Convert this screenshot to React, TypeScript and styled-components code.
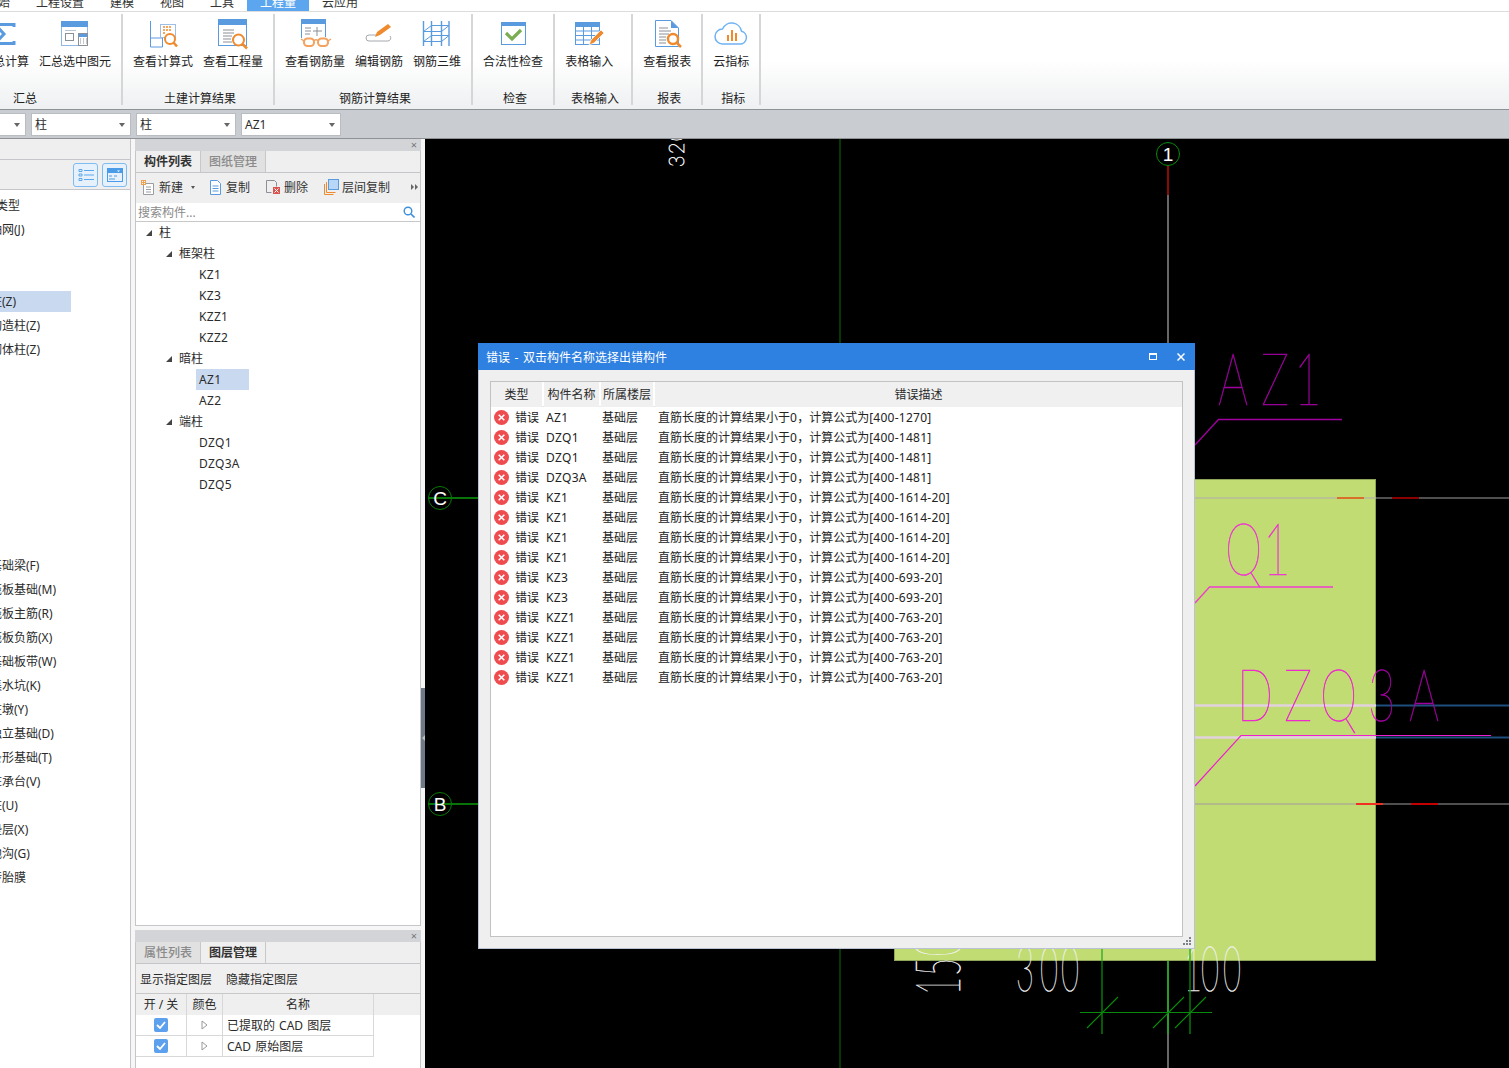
import React from "react";
import styled, { createGlobalStyle } from "styled-components";

const GlobalStyle = createGlobalStyle`
  html, body { margin: 0; padding: 0; background: #f4f4f4; overflow: hidden; }
  body { font-family: "Noto Sans", "Noto Sans CJK SC", sans-serif; font-size: 12px; color: #2b2b2b; }
  * { box-sizing: border-box; }
`;

const Page = styled.div`
  width: 1509px; height: 1068px; overflow: hidden; display: flex; flex-direction: column;
`;

/* ---------- menu ---------- */
const MenuBar = styled.div`
  height: 12px; flex: none; display: flex; align-items: flex-start; overflow: hidden;
  background: #fff; border-bottom: 1px solid #dcdcdc; padding-left: 0;
`;
const MenuTrack = styled.div`display: flex; margin-left: -27px;`;
const MenuTab = styled.div<{ $active?: boolean }>`
  height: 16px; margin-top: -4px; padding: 0 13px; line-height: 14px; white-space: nowrap;
  background: ${p => (p.$active ? "#5ba6ee" : "transparent")};
  color: ${p => (p.$active ? "#fff" : "#333")};
`;

/* ---------- ribbon ---------- */
const Ribbon = styled.div`
  height: 98px; flex: none; display: flex; margin-left: -75px; width: 1584px;
  background: linear-gradient(#fff 0%, #fff 50%, #eef0f1 100%);
  border-bottom: 1px solid #8e9297;
`;
const RibbonGroup = styled.div<{ $width?: number }>`
  margin: 2px 0 4px; padding: 4px 10px 0; display: flex; flex-direction: column; flex: none;
  border-right: 2px solid #d4d6d8; position: relative;
  ${p => (p.$width ? `width: ${p.$width}px;` : "")}
`;
const RibbonButtons = styled.div`display: flex; gap: 10px; align-items: flex-start;`;
const GhostButton = styled.div`width: 36px;`;
const RibbonButton = styled.div`
  display: flex; flex-direction: column; align-items: center; white-space: nowrap; color: #222;
  line-height: 14px;
`;
const IconSlot = styled.div`width: 36px; height: 32px; margin-bottom: 5px; svg { display: block; margin: 0; overflow: visible; }`;
const GroupLabel = styled.div`
  margin-top: auto; text-align: center; line-height: 14px; color: #222; height: 14px; margin-left: -6px; margin-right: -10px; margin-bottom: -1px;
`;

/* ---------- combos ---------- */
const ComboBar = styled.div`
  height: 29px; flex: none; display: flex; gap: 5px; padding-top: 3px; background: #c9ccd1;
  border-bottom: 1px solid #8e9297; margin-left: -74px; width: 1583px;
`;
const Combo = styled.div`
  width: 100px; height: 23px; background: #fff; border: 1px solid #b9bcc0; padding-left: 3px; line-height: 21px; position: relative;
  &::after {
    content: ""; position: absolute; right: 5px; top: 9px; border: 3.5px solid transparent; border-top: 4px solid #666; border-bottom: 0;
  }
`;

/* ---------- main ---------- */
const Main = styled.div`flex: 1; min-height: 0; display: flex; background: #f6f6f6;`;

const NavPanel = styled.div`
  width: 131px; flex: none; background: #fff; border-right: 1px solid #c4c6ca; display: flex; flex-direction: column; overflow: hidden;
`;
const NavHead = styled.div`height: 21px; flex: none; background: #efefef; border-bottom: 1px solid #c4c6ca;`;
const NavTools = styled.div`
  height: 30px; flex: none; background: #efefef; border-bottom: 1px solid #c4c6ca;
  display: flex; justify-content: flex-end; align-items: flex-start; gap: 4px; padding: 3px 3px 0 0;
`;
const ViewToggle = styled.div`
  width: 25px; height: 24px; border: 1px solid #7dbcf2; border-radius: 3px; background: #e6f1fb;
  display: flex; align-items: center; justify-content: center;
`;
const NavList = styled.div`padding-top: 3px; flex: 1;`;
const NavItem = styled.div<{ $active?: boolean; $head?: boolean }>`
  height: 24px; display: flex; align-items: center;
  span {
    display: block; height: 21px; line-height: 21px; width: 81px; margin-left: ${p => (p.$head ? -4 : -10)}px; white-space: nowrap;
    background: ${p => (p.$active ? "#c9d9f0" : "transparent")};
  }
`;

const SidePanel = styled.div`width: 286px; flex: none; display: flex; flex-direction: column; margin-left: 4px;`;
const Pane = styled.div<{ $height?: number }>`
  border: 1px solid #c4c6ca; border-width: 0 1px 1px 1px; background: #fff; display: flex; flex-direction: column;
  ${p => (p.$height ? `height: ${p.$height}px; flex: none;` : "flex: 1; min-height: 0; border-bottom: 0;")}
`;
const PaneStrip = styled.div`
  height: 12px; flex: none; background: #d2d4d8; display: flex; justify-content: flex-end; align-items: center; padding-right: 4px; margin: 0 -1px;
  color: #777; font-size: 11px; line-height: 12px;
`;
const PaneTabs = styled.div`height: 22px; flex: none; display: flex; background: #efefef; border-bottom: 1px solid #c4c6ca; border-top: 0;`;
const PaneTab = styled.div<{ $active?: boolean }>`
  width: 65px; text-align: center; line-height: 21px; font-weight: ${p => (p.$active ? 700 : 500)};
  color: ${p => (p.$active ? "#333" : "#8a8a8a")};
  background: ${p => (p.$active ? "#efefef" : "#e1e1e1")};
  border-right: 1px solid #c8c8c8;
`;
const PaneToolbar = styled.div`
  height: 30px; flex: none; display: flex; align-items: center; padding: 0 0 2px 4px; background: #efefef; position: relative;
`;
const ToolItem = styled.div<{ $gap: number }>`
  display: flex; align-items: center; gap: 3px; margin-right: ${p => p.$gap}px; white-space: nowrap; color: #333;
`;
const CaretDown = styled.i`
  display: block; margin-left: 5px; border: 2.5px solid transparent; border-top: 3px solid #555; border-bottom: 0;
`;
const MoreArrows = styled.div`
  position: absolute; right: 2px; top: 11px; display: flex; gap: 1px;
  i { display: block; border: 3px solid transparent; border-left: 3px solid #666; border-right: 0; }
`;
const SearchRow = styled.div`
  height: 19px; flex: none; display: flex; align-items: center; justify-content: space-between; padding: 0 5px 0 2px;
  color: #8a8a8a; border-bottom: 1px solid #c8c8c8; background: #fff;
`;
const Tree = styled.div`flex: 1; background: #fff;`;
const TreeRow = styled.div<{ $level: number }>`
  height: 21px; display: flex; align-items: center; gap: 7px; padding-left: ${p => 10 + p.$level * 20}px; line-height: 21px;
`;
const TreeLeaf = styled.div<{ $selected?: boolean }>`
  height: 21px; width: 53px; margin-left: 60px; padding-left: 3px; line-height: 21px; white-space: nowrap; letter-spacing: .3px;
  background: ${p => (p.$selected ? "#c9d9f0" : "transparent")};
`;
const PaneGap = styled.div`height: 4px; flex: none;`;
const LayerActions = styled.div`
  height: 30px; flex: none; display: flex; align-items: center; gap: 14px; padding-left: 4px; background: #efefef; border-bottom: 1px solid #c8c8c8;
`;
const LayerHead = styled.div`
  height: 21px; flex: none; display: grid; grid-template-columns: 51px 36px 151px 1fr; background: #efefef;
  span { text-align: center; line-height: 21px; border-right: 1px solid #d8d8d8; }
  span:last-child { border-right: 0; }
`;
const LayerRow = styled.div`
  width: 238px; height: 21px; flex: none; display: grid; grid-template-columns: 51px 36px 151px; border-bottom: 1px solid #d8d8d8;
  & > div { border-right: 1px solid #d8d8d8; display: flex; align-items: center; justify-content: center; }
  & > div:last-child { justify-content: flex-start; padding-left: 4px; white-space: pre; word-spacing: 1px; }
`;
const CheckBox = styled.div`
  width: 14px; height: 14px; border-radius: 2px; background: #5ca0ee; display: flex; align-items: center; justify-content: center;
`;
const Splitter = styled.div`width: 4px; flex: none; padding-top: 549px; background: #f6f6f6;`;
const SplitHandle = styled.div`
  height: 100px; background: #6f7a86; display: flex; align-items: center; justify-content: center;
  &::before { content: ""; border: 3px solid transparent; border-right: 3px solid #b8bec4; border-left: 0; }
`;

/* ---------- canvas ---------- */
const Canvas = styled.div`flex: 1; position: relative; background: #000; overflow: hidden;`;
const Drawing = styled.svg`position: absolute; inset: 0; display: block;`;
const CadText = styled.text`
  font-family: "Lato", "Inter", sans-serif; font-weight: 100;
`;
const AxisText = styled.text`font-family: "Liberation Sans", sans-serif; font-size: 19px;`;

/* ---------- dialog ---------- */
const Dialog = styled.div`
  position: absolute; left: 53px; top: 204px; width: 717px; height: 606px; display: flex; flex-direction: column;
  background: #efefef; border: 1px solid #b9c2d2; border-top: 0;
`;
const DialogTitle = styled.div`
  height: 27px; flex: none; margin: 0 -1px; background: #2e80e1; color: #fff; display: flex; align-items: center; padding: 0 10px 0 8px;
  word-spacing: 1.5px;
`;
const TitleButtons = styled.div`margin-left: auto; display: flex; align-items: center; gap: 20px;`;
const MaxBox = styled.div`width: 8px; height: 7px; border: 1px solid #fff; border-top-width: 2px;`;
const DialogBody = styled.div`flex: 1; min-height: 0; padding: 11px; display: flex;`;
const ErrorTable = styled.div`flex: 1; background: #fff; border: 1px solid #c2c2c2;`;
const ErrorHead = styled.div`
  height: 25px; display: grid; grid-template-columns: 51px 55px 52px 1fr; gap: 2px; background: #fff; border-bottom: 1px solid #e8e8e8;
  span { background: #f0f0f0; text-align: center; line-height: 25px; white-space: nowrap; }
`;
const ErrorRow = styled.div`
  height: 20px; display: grid; grid-template-columns: 55px 56px 56px 1fr; align-items: start; line-height: 22px; white-space: nowrap; color: #222;
`;
const ErrorKind = styled.div`
  display: flex; align-items: center; gap: 6px; padding-left: 3px; height: 22px;
  svg { margin-top: -2px; }
`;
const PartName = styled.div`letter-spacing: .3px;`;
const Formula = styled.span`letter-spacing: .25px;`;
const Grip = styled.svg`position: absolute; right: 2px; bottom: 2px; display: block;`;

/* ---------- icons ---------- */
const B = "#5a9be0";
const O = "#ef8a2e";
const G = "#8b9096";
const Svg = ({ children }: { children: React.ReactNode }) => (
  <svg width="36" height="32" viewBox="0 0 36 32" fill="none">{children}</svg>
);
const icons: Record<string, React.ReactNode> = {
  sigma: <path d="M27 9V6.500H8L17 16 8 25.500H27V23" stroke={B} strokeWidth="3" />,
  sum: (<>
    <rect x="4.500" y="3.500" width="26" height="24" stroke="#8db7e6" fill="#fff" />
    <rect x="4" y="3" width="27" height="6" fill={B} />
    <rect x="8.500" y="15.500" width="8" height="7" stroke={G} />
    <rect x="8" y="12" width="11" height="1" fill="#b9c4d0" />
    <rect x="21.500" y="15.500" width="9" height="12" stroke={G} fill="#fff" />
    <rect x="22" y="16" width="8" height="3" fill={B} />
    <path d="M23 21h1m2 0h1m2 0h1M23 23h1m2 0h1m2 0h1M23 25h1m2 0h1m2 0h1" stroke={G} />
  </>),
  calc: (<>
    <path d="M5.500 3v26h12v-9h-12" stroke={B} />
    <rect x="15.500" y="6.500" width="15" height="13" stroke="#9dbfe6" fill="#fff" />
    <path d="M18 9h2m1 0h2m1 0h2M18 12h2m1 0h2m1 0h2M18 15h2" stroke={O} strokeWidth="1.500" />
    <circle cx="25" cy="21" r="5" stroke={O} strokeWidth="2" fill="#fff" />
    <path d="M28.500 24.500 32 28.500" stroke={O} strokeWidth="2.500" />
  </>),
  qty: (<>
    <rect x="3.500" y="1.500" width="28" height="26" stroke={B} fill="#fff" />
    <rect x="3" y="1" width="29" height="6" fill={B} />
    <path d="M8 12h11M8 15h11M8 18h9M8 21h8M8 24h9" stroke={G} />
    <circle cx="23.500" cy="22" r="5.500" stroke={O} strokeWidth="2" fill="#fff" />
    <path d="M27.500 26 32 30.500" stroke={O} strokeWidth="2.500" />
  </>),
  rebar: (<>
    <path d="M4.500 20V1.500h24V19" stroke={B} />
    <rect x="4" y="1" width="25" height="5" fill={B} />
    <path d="M8 10h6M8 13h6M8 16h5" stroke={G} />
    <path d="M20 9v9M16 13h9" stroke={G} />
    <rect x="7" y="20.500" width="10" height="7.500" rx="3.500" stroke="#f3a25f" strokeWidth="2" fill="#fff" />
    <rect x="21" y="20.500" width="10" height="7.500" rx="3.500" stroke="#f3a25f" strokeWidth="2" fill="#fff" />
    <path d="M17 22.500c1.500-1 2.500-1 4 0M7 23 4 21M31 23l3-2" stroke="#f3a25f" strokeWidth="1.500" />
  </>),
  edit: (<>
    <path d="M16 17H8a3 3 0 0 0 0 6h19a3 3 0 0 0 2-5" stroke="#a4a8ad" />
    <path d="M14 19l2-5 11-8 3 3-11 8z" fill={O} />
  </>),
  grid3d: (<>
    <path d="M4.500 3V28M12.500 3V28M22.500 3V28M30 3V28" stroke={B} strokeWidth="1.400" />
    <path d="M12.500 7.500H30M4.500 13.500H22.500M12.500 17.500H30M4.500 23.500H22.500M4.500 13.500 12.500 7.500M4.500 23.500 12.500 17.500M22.500 13.500 30 7.500M22.500 23.500 30 17.500" stroke={B} />
  </>),
  check: (<>
    <rect x="6.500" y="4.500" width="24" height="22" stroke={B} fill="#fff" />
    <rect x="6" y="4" width="25" height="4" fill={B} />
    <path d="M11 15l6 6 9-9" stroke="#7bae52" strokeWidth="3.200" />
  </>),
  table: (<>
    <rect x="4.500" y="4.500" width="24" height="22" stroke={B} fill="#fff" />
    <rect x="4" y="4" width="25" height="5" fill={B} />
    <path d="M4.500 13h24M4.500 17.500h24M4.500 22h24M12.500 9v17M20.500 9v17" stroke={B} />
    <path d="M18 27l2-5 10-10 3 3-10 10z" fill={O} stroke="#fff" strokeWidth=".7" />
  </>),
  report: (<>
    <path d="M6.500 2.500H22L29.500 10V28.500H6.500Z" stroke={B} fill="#fff" />
    <path d="M22 2.500 29.500 10H22Z" fill={B} />
    <path d="M10 10h9M10 13h12M10 16h10M10 19h7M10 22h7M10 25h7" stroke={G} />
    <circle cx="24" cy="21" r="5" stroke={O} strokeWidth="2.400" fill="#fff" />
    <path d="M27.500 24.500 32 29" stroke={O} strokeWidth="2.500" />
  </>),
  cloud: (<>
    <path d="M9.500 26H27a6.500 6.500 0 0 0 1.500-12.800A10 10 0 0 0 9.500 11 7.500 7.500 0 0 0 9.500 26Z" stroke="#6fb3f2" strokeWidth="1.500" />
    <path d="M14 17h2v6h-2zM18 12h2v11h-2zM22 15h2v8h-2z" fill={O} />
  </>),
};

const ToolIcon = ({ name }: { name: string }) => {
  const inner: Record<string, React.ReactNode> = {
    add: (<>
      <path d="M3.500 4.500H13.500V15.500H3.500Z M6 8h5M6 10.500h5M6 13h5" stroke="#9a9da1" fill="#fff" />
      <rect x="1" y="1" width="5" height="5" fill="#f0a050" />
      <path d="M2 2h1v1H2zM4 4h1v1H4zM2 4h1v1H2zM4 2h1v1H4z" fill="#fff" />
    </>),
    copy: (<>
      <path d="M3.500 1.500h7l3 3v11h-10z" stroke={B} fill="#fff" />
      <path d="M5.500 7h6M5.500 9.500h6M5.500 12h6" stroke={B} />
    </>),
    del: (<>
      <path d="M1.500 1.500h8l2 2v4M1.500 1.500v12h5" stroke={G} fill="none" />
      <rect x="8" y="8" width="7" height="7" fill="#d9534f" />
      <path d="M9.500 9.500l4 4m0-4l-4 4" stroke="#fff" />
    </>),
    floor: (<>
      <rect x="5.500" y=".5" width="10" height="10" fill="#b8d6f8" stroke={B} />
      <path d="M3.500 3v10.500h9M1.500 5v10.500h9" stroke={O} />
    </>),
  };
  return <svg width="16" height="16" viewBox="0 0 16 16" fill="none">{inner[name]}</svg>;
};

const ErrorIcon = () => (
  <svg width="15" height="15" viewBox="0 0 15 15">
    <circle cx="7.500" cy="7.500" r="7.500" fill="#ef4c50" />
    <path d="M4.700 4.700l5.600 5.600m0-5.600l-5.600 5.600" stroke="#fff" strokeWidth="1.600" />
  </svg>
);

const CheckMark = () => (
  <CheckBox>
    <svg width="10" height="8" viewBox="0 0 10 8" fill="none"><path d="M1 4l3 3 5-6" stroke="#fff" strokeWidth="1.800" /></svg>
  </CheckBox>
);

const TreeArrow = () => (
  <svg width="6" height="6" viewBox="0 0 6 6"><polygon points="6,0 6,6 0,6" fill="#444" /></svg>
);

const OutlineArrow = () => (
  <svg width="7" height="10" viewBox="0 0 7 10" fill="none"><path d="M1 1l5 4-5 4z" stroke="#999" /></svg>
);

/* ---------- data ---------- */
const menus = ["开始", "工程设置", "建模", "视图", "工具", "工程量", "云应用"];
const navItems = [
  "类型", "轴网(J)", "", "", "柱(Z)", "构造柱(Z)", "砌体柱(Z)", "", "", "", "", "", "", "", "",
  "基础梁(F)", "筏板基础(M)", "筏板主筋(R)", "筏板负筋(X)", "基础板带(W)", "集水坑(K)", "柱墩(Y)",
  "独立基础(D)", "条形基础(T)", "桩承台(V)", "桩(U)", "垫层(X)", "地沟(G)", "砖胎膜",
];
const F = "直筋长度的计算结果小于";
const errors: [string, string][] = [
  ["AZ1", "400-1270"], ["DZQ1", "400-1481"], ["DZQ1", "400-1481"], ["DZQ3A", "400-1481"],
  ["KZ1", "400-1614-20"], ["KZ1", "400-1614-20"], ["KZ1", "400-1614-20"], ["KZ1", "400-1614-20"],
  ["KZ3", "400-693-20"], ["KZ3", "400-693-20"],
  ["KZZ1", "400-763-20"], ["KZZ1", "400-763-20"], ["KZZ1", "400-763-20"], ["KZZ1", "400-763-20"],
];

const Cad = ({ text, x, y, size, sx, fill, spots, weight = 0.6 }: { text: string; x: number; y: number; size: number; sx: number; fill: string; spots: number[]; weight?: number }) => (
  <CadText
    transform={`translate(${x} ${y}) scale(${sx} 1)`}
    x={spots.map(s => s / sx).join(" ")}
    y={0}
    fontSize={size}
    fill={fill}
    stroke={fill}
    strokeWidth={weight}
  >{text}</CadText>
);

const CadDrawing = () => (
  <Drawing width="1084" height="929" viewBox="425 139 1084 929">
    <defs>
      <linearGradient id="dzq" gradientUnits="userSpaceOnUse" x1="0" x2="1000" y1="0" y2="0">
        <stop offset="0.2138" stopColor="#f01ed2" />
        <stop offset="0.2138" stopColor="#a000a0" />
      </linearGradient>
    </defs>
    <rect x="894.500" y="479.500" width="481" height="481" fill="#c1dc72" stroke="#8fa55a" />

    <path d="M840 139V1068" stroke="#0a6e0a" />
    <path d="M1168 165V195" stroke="#8b0a0a" strokeWidth="2" />
    <path d="M1168 195V479" stroke="#666" strokeWidth="2" />
    <path d="M1168 961V1034" stroke="#2a9a2a" strokeWidth="2" />
    <path d="M1168 1034V1068" stroke="#666" strokeWidth="2" />

    <path d="M429 498H478M429 804H478" stroke="#0a9a0a" strokeWidth="1.500" />
    <circle cx="440" cy="498" r="11.500" stroke="#0a7a0a" fill="none" />
    <circle cx="440" cy="804" r="11.500" stroke="#0a7a0a" fill="none" />
    <circle cx="1168" cy="154" r="11.500" stroke="#0a8a0a" fill="none" />
    <AxisText x="440" y="505" fill="#fff" textAnchor="middle">C</AxisText>
    <AxisText x="440" y="811" fill="#fff" textAnchor="middle">B</AxisText>
    <AxisText x="1168" y="161" fill="#fff" textAnchor="middle">1</AxisText>

    <path d="M1195 498H1376" stroke="#b6bb9c" strokeWidth="1.500" />
    <path d="M1376 498H1509" stroke="#6a6a6a" strokeWidth="1.500" />
    <path d="M1337 498H1364" stroke="#d8702c" strokeWidth="2" />
    <path d="M1392 498H1419" stroke="#8b0000" strokeWidth="2" />
    <path d="M1195 804H1376" stroke="#adb18f" strokeWidth="1.500" />
    <path d="M1376 804H1509" stroke="#6a6a6a" strokeWidth="1.500" />
    <path d="M1356 804H1383" stroke="#f03020" strokeWidth="2" />
    <path d="M1411 804H1438" stroke="#c40000" strokeWidth="2" />
    <path d="M1195 705.500H1376M1195 737.500H1376" stroke="#e2d2de" strokeWidth="2.500" />
    <path d="M1376 705.500H1509M1376 737.500H1509" stroke="#1f4f7d" strokeWidth="2" />

    <path d="M1195 445 1218.500 419.500H1342" stroke="#a000a0" strokeWidth="1.300" fill="none" />
    <path d="M1195 603 1209.500 587H1333" stroke="#ee3ccf" strokeWidth="1.300" fill="none" />
    <path d="M1195 786 1241 735.500H1491" stroke="#f01ed2" strokeWidth="1.200" fill="none" />

    <Cad text="AZ1" x={1218} y={405} size={73} sx={0.65} fill="#a000a0" spots={[0, 43, 76]} />
    <Cad text="Q1" x={1225} y={575} size={73} sx={0.65} fill="#f030d4" spots={[0, 38]} />
    <Cad text="DZQ3A" x={1237} y={721} size={73} sx={0.65} fill="url(#dzq)" spots={[0, 47, 83, 131, 172]} />

    <g transform="translate(684 167) rotate(-90)">
      <Cad text="320" x={0} y={0} size={22} sx={0.9} fill="#f4f4f4" spots={[0, 13, 26]} weight={0.8} />
    </g>
    <Cad text="300" x={1016} y={991} size={62} sx={0.5} fill="#f2f2f2" spots={[0, 24, 45]} weight={0.5} />
    <Cad text="100" x={1184} y={991} size={62} sx={0.5} fill="#f2f2f2" spots={[0, 17, 39]} weight={0.5} />
    <g transform="translate(960 995) rotate(-90)">
      <Cad text="150" x={0} y={0} size={62} sx={0.5} fill="#f2f2f2" spots={[0, 19, 39]} weight={0.5} />
    </g>

    <path d="M1102 961V1034M1190 961V1034" stroke="#0a8a0a" strokeWidth="1.300" />
    <path d="M1102 949V961M1190 949V961" stroke="#3fb02c" strokeWidth="1.500" />
    <path d="M1080 1012.500H1212" stroke="#0a8a0a" strokeWidth="1.200" />
    <path d="M1087 1028 1118 997M1153 1028 1184 997M1175 1028 1206 997" stroke="#0a8a0a" strokeWidth="1.200" />
  </Drawing>
);

const Btn = ({ icon, text }: { icon: string; text: string }) => (
  <RibbonButton>
    <IconSlot><Svg>{icons[icon]}</Svg></IconSlot>
    {text}
  </RibbonButton>
);

export default function App() {
  const treeData = [
    { kind: "l", level: 0, text: "柱" },
    { kind: "l", level: 1, text: "框架柱" },
    { kind: "i", text: "KZ1" }, { kind: "i", text: "KZ3" }, { kind: "i", text: "KZZ1" }, { kind: "i", text: "KZZ2" },
    { kind: "l", level: 1, text: "暗柱" },
    { kind: "i", text: "AZ1", sel: true }, { kind: "i", text: "AZ2" },
    { kind: "l", level: 1, text: "端柱" },
    { kind: "i", text: "DZQ1" }, { kind: "i", text: "DZQ3A" }, { kind: "i", text: "DZQ5" },
  ];
  return (
    <Page>
      <GlobalStyle />
      <MenuBar>
        <MenuTrack>
          {menus.map(m => <MenuTab key={m} $active={m === "工程量"}>{m}</MenuTab>)}
        </MenuTrack>
      </MenuBar>
      <Ribbon>
        <RibbonGroup>
          <RibbonButtons>
            <GhostButton />
            <Btn icon="sigma" text="汇总计算" />
            <Btn icon="sum" text="汇总选中图元" />
          </RibbonButtons>
          <GroupLabel>汇总</GroupLabel>
        </RibbonGroup>
        <RibbonGroup>
          <RibbonButtons>
            <Btn icon="calc" text="查看计算式" />
            <Btn icon="qty" text="查看工程量" />
          </RibbonButtons>
          <GroupLabel>土建计算结果</GroupLabel>
        </RibbonGroup>
        <RibbonGroup>
          <RibbonButtons>
            <Btn icon="rebar" text="查看钢筋量" />
            <Btn icon="edit" text="编辑钢筋" />
            <Btn icon="grid3d" text="钢筋三维" />
          </RibbonButtons>
          <GroupLabel>钢筋计算结果</GroupLabel>
        </RibbonGroup>
        <RibbonGroup>
          <RibbonButtons><Btn icon="check" text="合法性检查" /></RibbonButtons>
          <GroupLabel>检查</GroupLabel>
        </RibbonGroup>
        <RibbonGroup $width={78}>
          <RibbonButtons><Btn icon="table" text="表格输入" /></RibbonButtons>
          <GroupLabel>表格输入</GroupLabel>
        </RibbonGroup>
        <RibbonGroup>
          <RibbonButtons><Btn icon="report" text="查看报表" /></RibbonButtons>
          <GroupLabel>报表</GroupLabel>
        </RibbonGroup>
        <RibbonGroup>
          <RibbonButtons><Btn icon="cloud" text="云指标" /></RibbonButtons>
          <GroupLabel>指标</GroupLabel>
        </RibbonGroup>
      </Ribbon>
      <ComboBar>
        <Combo>基础层</Combo>
        <Combo>柱</Combo>
        <Combo>柱</Combo>
        <Combo>AZ1</Combo>
      </ComboBar>
      <Main>
        <NavPanel>
          <NavHead />
          <NavTools>
            <ViewToggle>
              <svg width="16" height="14" viewBox="0 0 16 14" fill="none">
                <path d="M1 1.500h3v2H1zM1 6h3v2H1zM1 10.500h3v2H1z" stroke="#5ca8ec" />
                <path d="M6 2.500h10M6 7h10M6 11.500h10" stroke="#5ca8ec" />
              </svg>
            </ViewToggle>
            <ViewToggle>
              <svg width="16" height="14" viewBox="0 0 16 14" fill="none">
                <rect x=".5" y=".5" width="15" height="13" stroke="#4a9ce8" />
                <rect x="1" y="1" width="14" height="4" fill="#4a9ce8" />
                <path d="M2 8h3M7 8h3M2 11h6" stroke="#4a9ce8" />
                <path d="M10 2.500h3L11.500 4z" fill="#fff" />
              </svg>
            </ViewToggle>
          </NavTools>
          <NavList>
            {navItems.map((t, i) => (
              <NavItem key={i} $active={t === "柱(Z)"} $head={t === "类型"}><span>{t}</span></NavItem>
            ))}
          </NavList>
        </NavPanel>
        <SidePanel>
          <Pane $height={787}>
            <PaneStrip>×</PaneStrip>
            <PaneTabs>
              <PaneTab $active>构件列表</PaneTab>
              <PaneTab>图纸管理</PaneTab>
            </PaneTabs>
            <PaneToolbar>
              <ToolItem $gap={12}><ToolIcon name="add" />新建<CaretDown /></ToolItem>
              <ToolItem $gap={15}><ToolIcon name="copy" />复制</ToolItem>
              <ToolItem $gap={15}><ToolIcon name="del" />删除</ToolItem>
              <ToolItem $gap={0}><ToolIcon name="floor" />层间复制</ToolItem>
              <MoreArrows><i /><i /></MoreArrows>
            </PaneToolbar>
            <SearchRow>
              搜索构件...
              <svg width="12" height="12" viewBox="0 0 12 12" fill="none">
                <circle cx="5" cy="5" r="3.800" stroke="#3f8fdc" strokeWidth="1.400" />
                <path d="M8 8l3.500 3.500" stroke="#3f8fdc" strokeWidth="1.600" />
              </svg>
            </SearchRow>
            <Tree>
              {treeData.map((n, i) =>
                n.kind === "l" ? (
                  <TreeRow key={i} $level={n.level as number}><TreeArrow />{n.text}</TreeRow>
                ) : (
                  <TreeLeaf key={i} $selected={n.sel}>{n.text}</TreeLeaf>
                )
              )}
            </Tree>
          </Pane>
          <PaneGap />
          <Pane>
            <PaneStrip>×</PaneStrip>
            <PaneTabs>
              <PaneTab>属性列表</PaneTab>
              <PaneTab $active>图层管理</PaneTab>
            </PaneTabs>
            <LayerActions>
              <span>显示指定图层</span>
              <span>隐藏指定图层</span>
            </LayerActions>
            <LayerHead>
              <span>开 / 关</span><span>颜色</span><span>名称</span><span />
            </LayerHead>
            <LayerRow>
              <div><CheckMark /></div><div><OutlineArrow /></div><div>已提取的 CAD 图层</div>
            </LayerRow>
            <LayerRow>
              <div><CheckMark /></div><div><OutlineArrow /></div><div>CAD 原始图层</div>
            </LayerRow>
          </Pane>
        </SidePanel>
        <Splitter><SplitHandle /></Splitter>
        <Canvas>
          <CadDrawing />
          <Dialog>
            <DialogTitle>
              错误 - 双击构件名称选择出错构件
              <TitleButtons>
                <MaxBox />
                <svg width="8" height="8" viewBox="0 0 8 8" fill="none"><path d="M.5.500l7 7m0-7l-7 7" stroke="#fff" strokeWidth="1.500" /></svg>
              </TitleButtons>
            </DialogTitle>
            <DialogBody>
              <ErrorTable>
                <ErrorHead>
                  <span>类型</span><span>构件名称</span><span>所属楼层</span><span>错误描述</span>
                </ErrorHead>
                {errors.map(([name, formula], i) => (
                  <ErrorRow key={i}>
                    <ErrorKind><ErrorIcon />错误</ErrorKind>
                    <PartName>{name}</PartName>
                    <div>基础层</div>
                    <div>{F}<Formula>0</Formula>，计算公式为<Formula>[{formula}]</Formula></div>
                  </ErrorRow>
                ))}
              </ErrorTable>
            </DialogBody>
            <Grip width="9" height="9" viewBox="0 0 9 9" fill="#7d8188">
              <path d="M6 0h2v2H6zM3 3h2v2H3zM6 3h2v2H6zM0 6h2v2H0zM3 6h2v2H3zM6 6h2v2H6z" />
            </Grip>
          </Dialog>
        </Canvas>
      </Main>
    </Page>
  );
}
